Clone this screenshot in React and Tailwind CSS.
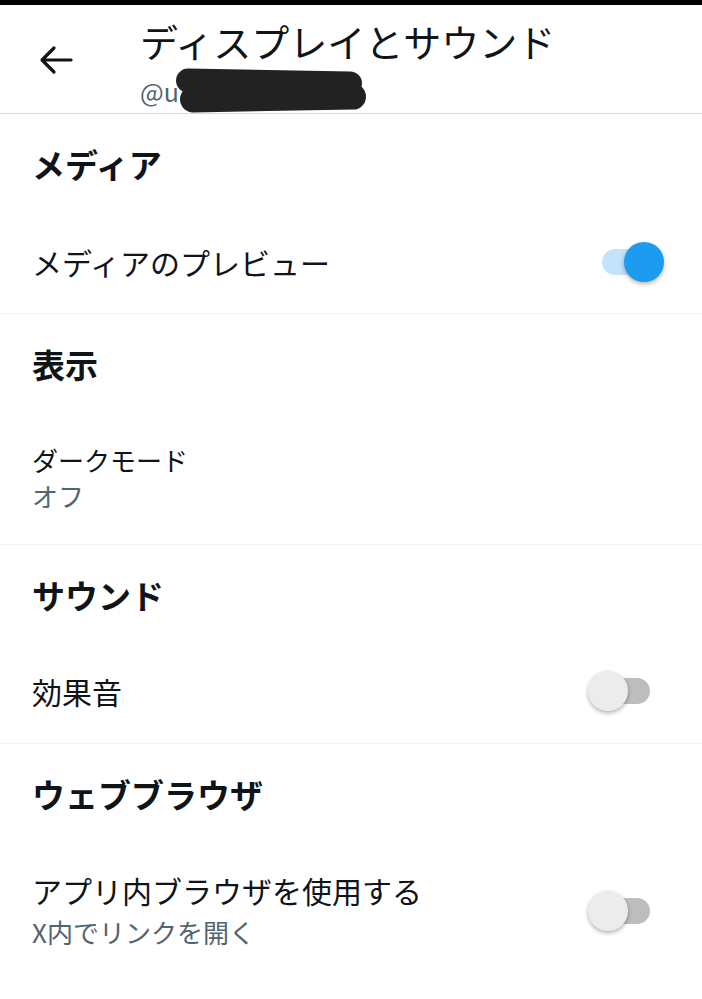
import React, { useState } from 'react'

const font = { fontFamily: '"Noto Sans CJK JP", "Noto Sans", sans-serif' }

function Toggle({ on, onChange }) {
  return (
    <button onClick={() => onChange(!on)} className="relative w-[48px] h-[26px] shrink-0">
      <span className={`absolute inset-0 rounded-full ${on ? 'bg-[#c3e2fb]' : 'bg-[#bdbdbd]'}`} />
      <span
        className={`absolute top-[-7px] w-[40px] h-[40px] rounded-full shadow-[0_2px_4px_rgba(0,0,0,0.3)] ${on ? 'left-[22px] bg-[#1d9bf0]' : 'left-[-14px] bg-[#ececec]'}`}
      />
    </button>
  )
}

function Heading({ children }) {
  return (
    <div className="h-[100px] flex items-center px-[32px]">
      <h2 className="text-[33px] font-bold text-[#0f1419] leading-none">{children}</h2>
    </div>
  )
}

export default function App() {
  const [preview, setPreview] = useState(true)
  const [sound, setSound]     = useState(false)
  const [browser, setBrowser] = useState(false)

  return (
    <div className="w-[702px] h-[999px] bg-white overflow-hidden" style={font}>
      <div className="h-[5px] bg-black" />

      <header className="h-[109px] flex items-start border-b border-[#cfd9de]">
        <div className="w-[140px] pt-[40px] pl-[39px]">
          <svg width="34" height="30" viewBox="0 0 34 30">
            <path d="M32 15H3M15 3L3 15l12 12" fill="none" stroke="#0f1419" strokeWidth="3.2" strokeLinecap="round" strokeLinejoin="round" />
          </svg>
        </div>
        <div className="flex flex-col pt-[14px]">
          <div className="text-[38px] leading-[44px] text-[#0f1419]">ディスプレイとサウンド</div>
          <div className="relative text-[25px] leading-[36px] text-[#536471] mt-[10px]">
            @u
            <span className="absolute left-[36px] top-[-3px] w-[186px] h-[24px] bg-[#222] rounded-full rotate-[1deg]" />
            <span className="absolute left-[40px] top-[12px] w-[186px] h-[26px] bg-[#222] rounded-[14px] rotate-[-1deg]" />
          </div>
        </div>
      </header>

      <section className="border-b border-[#eff3f4]">
        <Heading>メディア</Heading>
        <div className="h-[99px] flex items-center justify-between pl-[32px] pr-[52px]">
          <span className="text-[30px] text-[#0f1419] leading-none mt-[-4px]">メディアのプレビュー</span>
          <span className="mt-[-4px] flex"><Toggle on={preview} onChange={setPreview} /></span>
        </div>
      </section>

      <section className="border-b border-[#eff3f4]">
        <Heading>表示</Heading>
        <div className="h-[130px] flex flex-col justify-center px-[32px]">
          <span className="text-[26px] text-[#0f1419] leading-[36px] mt-[-2px]">ダークモード</span>
          <span className="text-[26px] text-[#536471] leading-[36px]">オフ</span>
        </div>
      </section>

      <section className="border-b border-[#eff3f4]">
        <Heading>サウンド</Heading>
        <div className="h-[98px] flex items-center justify-between pl-[32px] pr-[52px]">
          <span className="text-[30px] text-[#0f1419] leading-none mt-[-6px]">効果音</span>
          <span className="mt-[-6px] flex"><Toggle on={sound} onChange={setSound} /></span>
        </div>
      </section>

      <section>
        <Heading>ウェブブラウザ</Heading>
        <div className="h-[134px] flex items-center justify-between pl-[32px] pr-[52px]">
          <div className="flex flex-col">
            <span className="text-[30px] text-[#0f1419] leading-[42px]">アプリ内ブラウザを使用する</span>
            <span className="text-[26px] text-[#536471] leading-[42px]">X内でリンクを開く</span>
          </div>
          <Toggle on={browser} onChange={setBrowser} />
        </div>
      </section>
    </div>
  )
}
